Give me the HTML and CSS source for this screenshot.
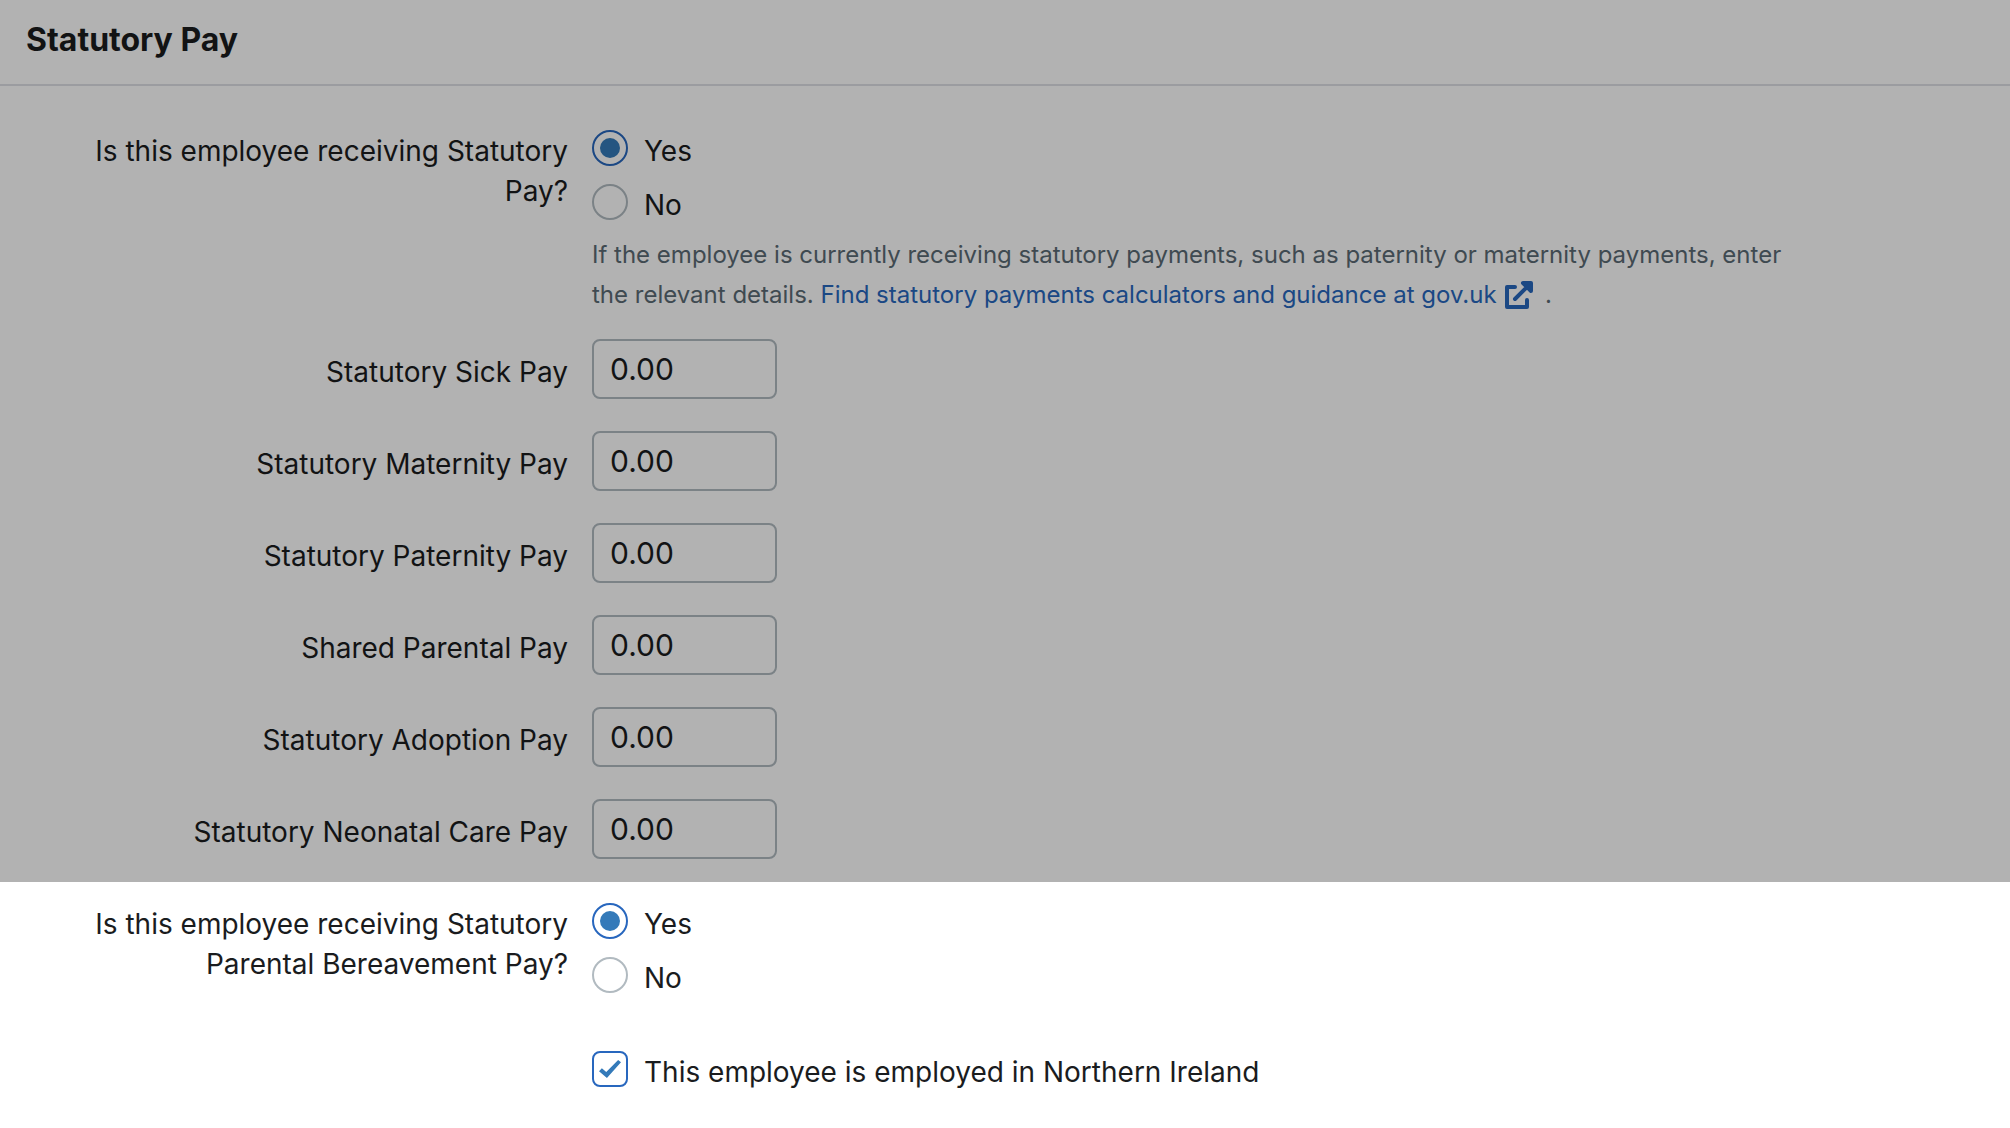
FILE: index.html
```
<!DOCTYPE html>
<html lang="en">
<head>
    <meta charset="UTF-8">
    <meta name="viewport" content="width=device-width, initial-scale=1.0">
    <title>Statutory Pay</title>
    <link rel="stylesheet" href="styles.css">
</head>
<body>
<form>
    <section class="panel dimmed">
        <header class="panel-header">
            <h2>Statutory Pay</h2>
        </header>

        <div class="panel-body">
            <div class="form-row help-row" role="radiogroup" aria-labelledby="statPayLabel">
                <span class="form-label" id="statPayLabel">Is this employee receiving Statutory Pay?</span>
                <div class="form-field">
                    <div class="options">
                        <label class="option"><input type="radio" name="statPay" value="yes" checked> Yes</label>
                        <label class="option"><input type="radio" name="statPay" value="no"> No</label>
                    </div>
                    <p class="help-text">If the employee is currently receiving statutory payments, such as paternity or maternity payments, enter the relevant details. <a href="#">Find statutory payments calculators and guidance at gov.uk <svg class="icon-external" viewBox="0 0 28 28" aria-hidden="true"><path d="M10 6H2v20h20v-7" /><path d="M10 18L24 4M18 2h8v8z" /></svg></a> .</p>
                </div>
            </div>

            <div class="form-row">
                <label class="form-label" for="sickPay">Statutory Sick Pay</label>
                <div class="form-field"><input type="text" id="sickPay" value="0.00"></div>
            </div>
            <div class="form-row">
                <label class="form-label" for="maternityPay">Statutory Maternity Pay</label>
                <div class="form-field"><input type="text" id="maternityPay" value="0.00"></div>
            </div>
            <div class="form-row">
                <label class="form-label" for="paternityPay">Statutory Paternity Pay</label>
                <div class="form-field"><input type="text" id="paternityPay" value="0.00"></div>
            </div>
            <div class="form-row">
                <label class="form-label" for="sharedPay">Shared Parental Pay</label>
                <div class="form-field"><input type="text" id="sharedPay" value="0.00"></div>
            </div>
            <div class="form-row">
                <label class="form-label" for="adoptionPay">Statutory Adoption Pay</label>
                <div class="form-field"><input type="text" id="adoptionPay" value="0.00"></div>
            </div>
            <div class="form-row">
                <label class="form-label" for="neonatalPay">Statutory Neonatal Care Pay</label>
                <div class="form-field"><input type="text" id="neonatalPay" value="0.00"></div>
            </div>
        </div>
    </section>

    <section class="panel bereavement">
        <div class="form-row" role="radiogroup" aria-labelledby="bereavementLabel">
            <span class="form-label" id="bereavementLabel">Is this employee receiving Statutory Parental Bereavement Pay?</span>
            <div class="form-field">
                <div class="options">
                    <label class="option"><input type="radio" name="bereavementPay" value="yes" checked> Yes</label>
                    <label class="option"><input type="radio" name="bereavementPay" value="no"> No</label>
                </div>
                <label class="option region"><input type="checkbox" name="northernIreland" checked> This employee is employed in Northern Ireland</label>
            </div>
        </div>
    </section>
</form>
</body>
</html>
```
FILE: styles.css
```
* {
    box-sizing: border-box;
}
body {
    margin: 0;
    background: #ffffff;
    color: #1a1c1e;
    font-family: Inter, "Liberation Sans", sans-serif;
    font-size: 28px;
    line-height: 40px;
}
.dimmed {
    position: relative;
}
.dimmed::after {
    content: "";
    position: absolute;
    inset: 0;
    background: rgba(0, 0, 0, 0.3);
    pointer-events: none;
}
.panel-header {
    padding: 20px 26px 24px;
    border-bottom: 2px solid #dfe0e5;
}
h2 {
    margin: 0;
    font-size: 32px;
    font-weight: 700;
    line-height: 40px;
}
.panel-body {
    padding: 44px 178px 23px 72px;
}
.bereavement {
    padding: 21px 178px 40px 72px;
}
.form-row {
    display: grid;
    grid-template-columns: 2fr 5fr;
    column-gap: 24px;
    margin-bottom: 32px;
}
.form-row:last-child {
    margin-bottom: 0;
}
.help-row {
    margin-bottom: 24px;
}
.form-label {
    padding-top: 1px;
    text-align: right;
}
label.form-label {
    padding-top: 13px;
}
.options {
    display: grid;
    gap: 12px;
    justify-items: start;
}
.option {
    display: flex;
    align-items: flex-start;
    gap: 16px;
    line-height: 42px;
}
.region {
    margin-top: 52px;
}
input[type="text"] {
    display: block;
    width: 185px;
    height: 60px;
    padding: 0 16px;
    border: 2px solid #b1bac0;
    border-radius: 8px;
    background: #ffffff;
    color: inherit;
    font-family: inherit;
    font-size: 30px;
}
input[type="radio"],
input[type="checkbox"] {
    appearance: none;
    flex: none;
    display: grid;
    place-items: center;
    width: 36px;
    height: 36px;
    margin: 0;
    border: 2px solid #b1bac0;
    background: #ffffff;
}
input[type="radio"] {
    border-radius: 50%;
}
input[type="checkbox"] {
    border-radius: 8px;
}
input[type="radio"]:checked,
input[type="checkbox"]:checked {
    border-color: #2867be;
}
input[type="radio"]:checked::before {
    content: "";
    width: 20px;
    height: 20px;
    border-radius: 50%;
    background: #347ab9;
}
input[type="checkbox"]:checked::before {
    content: "";
    width: 22px;
    height: 18px;
    background: #347ab9;
    clip-path: polygon(0 62%, 13% 46%, 33% 66%, 87% 0, 100% 12%, 36% 100%);
}
.help-text {
    max-width: 1216px;
    margin: 9px 0 0;
    color: #5b6b75;
    font-size: 24px;
}
a {
    color: #2867be;
    text-decoration: none;
}
.icon-external {
    width: 28px;
    height: 28px;
    margin: 0 5px 0 2px;
    vertical-align: -6px;
    fill: none;
    stroke: currentColor;
    stroke-width: 4;
    stroke-linecap: round;
    stroke-linejoin: round;
}
```
